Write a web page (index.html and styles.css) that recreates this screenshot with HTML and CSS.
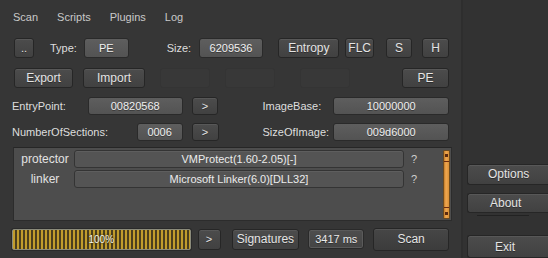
FILE: index.html
```html
<!DOCTYPE html>
<html>
<head>
<meta charset="utf-8">
<link rel="stylesheet" href="styles.css">
</head>
<body>
<div class="app">
  <div class="main">
    <div class="tabs">
      <span class="tab">Scan</span>
      <span class="tab">Scripts</span>
      <span class="tab">Plugins</span>
      <span class="tab">Log</span>
    </div>

    <div class="row r1">
      <div class="btn b-dots">..</div>
      <div class="lbl l-type">Type:</div>
      <div class="field f-type">PE</div>
      <div class="lbl l-size">Size:</div>
      <div class="field f-size">6209536</div>
      <div class="btn b-entropy">Entropy</div>
      <div class="btn b-flc">FLC</div>
      <div class="btn b-s">S</div>
      <div class="btn b-h">H</div>
    </div>

    <div class="row r2">
      <div class="btn b-export">Export</div>
      <div class="btn b-import">Import</div>
      <div class="ghost g1"></div>
      <div class="ghost g2"></div>
      <div class="ghost g3"></div>
      <div class="btn b-pe">PE</div>
    </div>

    <div class="row r3">
      <div class="lbl l-ep">EntryPoint:</div>
      <div class="field f-ep">00820568</div>
      <div class="btn b-go">&gt;</div>
      <div class="lbl l-ib">ImageBase:</div>
      <div class="field f-ib">10000000</div>
    </div>

    <div class="row r4">
      <div class="lbl l-ns">NumberOfSections:</div>
      <div class="field f-ns">0006</div>
      <div class="btn b-go">&gt;</div>
      <div class="lbl l-ib">SizeOfImage:</div>
      <div class="field f-ib">009d6000</div>
    </div>

    <div class="results">
      <div class="res-list">
        <div class="res-row">
          <div class="res-type">protector</div>
          <div class="res-name">VMProtect(1.60-2.05)[-]</div>
          <div class="res-q">?</div>
        </div>
        <div class="res-row">
          <div class="res-type">linker</div>
          <div class="res-name">Microsoft Linker(6.0)[DLL32]</div>
          <div class="res-q">?</div>
        </div>
      </div>
      <div class="scroll">
        <span class="dot top"></span>
        <span class="bar-line l1"></span>
        <span class="bar-line l2"></span>
        <span class="dot bottom"></span>
      </div>
    </div>

    <div class="row r5">
      <div class="progress"><span>100%</span></div>
      <div class="btn b-go2">&gt;</div>
      <div class="btn b-sig">Signatures</div>
      <div class="time">3417 ms</div>
      <div class="btn b-scan">Scan</div>
    </div>
  </div>

  <div class="side">
    <div class="btn s-btn">Options</div>
    <div class="btn s-btn s-about">About</div>
    <div class="s-line"></div>
    <div class="btn s-btn s-exit">Exit</div>
  </div>
</div>
</body>
</html>
```

FILE: styles.css
```css
* { box-sizing: border-box; }
html, body {
  margin: 0;
  padding: 0;
  width: 548px;
  height: 258px;
  overflow: hidden;
  background: #333333;
  font-family: "Liberation Sans", Arial, sans-serif;
  font-size: 11px;
  color: #dcdcdc;
}
.app {
  display: flex;
  height: 258px;
}
.main {
  width: 463px;
  height: 258px;
  padding: 0 12px;
  background: #363636;
  border-right: 2px solid #2e2e2e;
}
.tabs {
  display: flex;
  align-items: center;
  height: 34px;
  padding-left: 1px;
}
.tab {
  color: #c9c9c9;
  margin-right: 19px;
}
.row {
  display: flex;
  align-items: center;
}
.btn, .field, .time {
  display: flex;
  align-items: center;
  justify-content: center;
  border-radius: 3px;
  white-space: nowrap;
  text-shadow: 0 1px 0 rgba(0,0,0,0.35);
}
.btn {
  background: linear-gradient(#4c4c4c, #414141);
  border: 1px solid #262626;
  box-shadow: inset 0 1px 0 rgba(255,255,255,0.07);
  color: #e4e4e4;
}
.field {
  background: linear-gradient(#5e5e5e, #535353);
  border: 1px solid #2a2a2a;
  color: #f0f0f0;
}
.lbl {
  color: #dedede;
  white-space: nowrap;
}

/* row 1 */
.r1 { margin-top: 4px; height: 20px; }
.r1 > div { height: 20px; }
.b-dots { margin-left: 2px; width: 20px; }
.l-type { margin-left: 16px; width: 34px; display: flex; align-items: center; }
.f-type { width: 45px; }
.l-size { margin-left: 38px; width: 32px; display: flex; align-items: center; }
.f-size { width: 65px; }
.b-entropy { margin-left: 15px; width: 61px; font-size: 12px; }
.b-flc { margin-left: 6px; width: 29px; font-size: 12px; }
.b-s { margin-left: 12px; width: 26px; font-size: 12px; }
.b-h { margin-left: 10px; width: 27px; font-size: 12px; }

/* row 2 */
.r2 { margin-top: 10px; height: 20px; }
.r2 > div { height: 20px; }
.b-export { margin-left: 2px; width: 59px; font-size: 12px; }
.b-import { margin-left: 10px; width: 62px; font-size: 12px; }
.ghost {
  width: 50px;
  border-radius: 3px;
  background: #383838;
  border: 1px solid #343434;
}
.g1 { margin-left: 15px; }
.g2 { margin-left: 15px; }
.g3 { margin-left: 25px; }
.b-pe { margin-left: auto; width: 47px; font-size: 12px; }

/* rows 3-4 */
.r3 { margin-top: 9px; height: 18px; }
.r4 { margin-top: 8px; height: 18px; }
.r3 > div, .r4 > div { height: 18px; }
.l-ep { width: 76px; display: flex; align-items: center; }
.l-ns { width: 125px; display: flex; align-items: center; }
.f-ep { width: 95px; }
.f-ns { width: 46px; }
.b-go { margin-left: 9px; width: 27px; }
.l-ib { margin-left: 44px; width: 71px; display: flex; align-items: center; }
.f-ib { width: 116px; }

/* results */
.results {
  margin-top: 6px;
  margin-left: 1px;
  width: 439px;
  height: 74px;
  background: #4d4d4d;
  border: 1px solid #2c2c2c;
  border-top-color: #262626;
  display: flex;
  padding: 2px 1px 2px 2px;
}
.res-list {
  flex: 1;
  display: flex;
  flex-direction: column;
  gap: 2px;
}
.res-row {
  display: flex;
  align-items: center;
  height: 18px;
}
.res-type {
  width: 58px;
  text-align: center;
  color: #e2e2e2;
  font-size: 12px;
}
.res-name {
  width: 330px;
  height: 18px;
  display: flex;
  align-items: center;
  justify-content: center;
  background: #545454;
  border: 1px solid #343434;
  border-radius: 3px;
  box-shadow: inset 0 1px 0 rgba(255,255,255,0.06);
  color: #ececec;
  white-space: nowrap;
}
.res-q {
  width: 20px;
  text-align: center;
  color: #cfcfcf;
}
.scroll {
  position: relative;
  width: 7px;
  height: 69px;
  background: linear-gradient(90deg, #c07a28, #f0a850 40%, #d89038);
  border: 1px solid #6a4a20;
  border-radius: 1px;
}
.scroll .dot {
  position: absolute;
  left: 1px;
  width: 3px;
  height: 3px;
  background: #5a2a10;
}
.scroll .top { top: 3px; }
.scroll .bottom { bottom: 3px; }
.scroll .bar-line {
  position: absolute;
  left: 0;
  width: 5px;
  height: 1px;
  background: #6a2a10;
}
.scroll .l1 { top: 10px; }
.scroll .l2 { bottom: 10px; }

/* bottom row */
.r5 { margin-top: 7px; height: 22px; }
.progress {
  width: 179px;
  height: 21px;
  border: 1px solid #8a8a7a;
  border-radius: 2px;
  background:
    repeating-linear-gradient(90deg, #c09c2c 0 2px, #4a3e1e 2px 4px);
  display: flex;
  align-items: center;
  justify-content: center;
  box-shadow: 0 0 0 1px #2a2a2a;
}
.progress span {
  color: #fbf8ec;
  font-size: 10px;
  text-shadow: 0 0 2px #3a3010, 0 0 2px #3a3010;
}
.b-go2 { margin-left: 7px; width: 23px; height: 21px; }
.b-sig { margin-left: 11px; width: 68px; height: 21px; font-size: 12px; }
.time {
  margin-left: 9px;
  width: 56px;
  height: 20px;
  background: linear-gradient(#4e4e4e, #444);
  border: 1px solid #2a2a2a;
  box-shadow: inset 0 0 0 1px #5a5a5a;
  color: #e8e8e8;
}
.b-scan { margin-left: 9px; width: 76px; height: 23px; font-size: 12px; background: linear-gradient(#464646, #3c3c3c); }

/* side */
.side {
  flex: 1;
  display: flex;
  flex-direction: column;
  padding-top: 164px;
  padding-left: 4px;
  background: #323232;
}
.s-btn {
  height: 22px;
  width: 84px;
  border-radius: 3px 0 0 3px;
  border-right: none;
  font-size: 12px;
  justify-content: flex-start;
  padding-left: 20px;
}
.s-about { margin-top: 8px; padding-left: 22px; }
.s-line {
  margin-top: 2px;
  margin-left: 10px;
  width: 52px;
  height: 1px;
  background: #222;
}
.s-exit { margin-top: 19px; height: 24px; padding-left: 27px; }
```
